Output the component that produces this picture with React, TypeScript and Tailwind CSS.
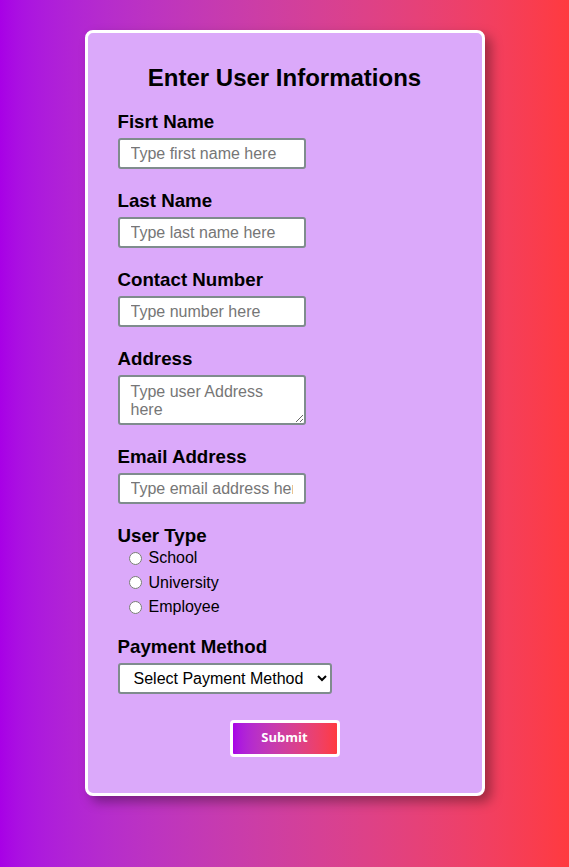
import { useState } from "react";

const inputCls =
  "block h-[31px] w-[188px] rounded-[3px] border-2 border-[#7f8c8d] bg-white px-[11px] text-[16px] text-black placeholder:text-[#767676] outline-none";

function Field({ label, children }: { label: string; children: React.ReactNode }) {
  return (
    <div className="mb-[21px]">
      <label className="block text-[18.72px] font-bold leading-[21px]">{label}</label>
      <div className="mt-[6px]">{children}</div>
    </div>
  );
}

export default function App() {
  const [userType, setUserType] = useState("");
  const [payment, setPayment] = useState("");

  return (
    <div className="min-h-[867px] w-full bg-gradient-to-r from-[#a800e6] to-[#ff3a3e] pt-[30px] font-['Liberation_Sans',Arial,sans-serif] text-black">
      <form
        onSubmit={(e) => e.preventDefault()}
        className="mx-auto w-[400px] rounded-[8px] border-[3px] border-white bg-[#dba9fa] px-[30px] pb-[36px] pt-[31px] shadow-[6px_6px_12px_rgba(0,0,0,0.35)]"
      >
        <h2 className="mb-[19px] text-center text-[24px] font-bold leading-[28px]">Enter User Informations</h2>

        <Field label="Fisrt Name">
          <input className={inputCls} placeholder="Type first name here" />
        </Field>
        <Field label="Last Name">
          <input className={inputCls} placeholder="Type last name here" />
        </Field>
        <Field label="Contact Number">
          <input className={inputCls} placeholder="Type number here" />
        </Field>
        <Field label="Address">
          <textarea
            className="block h-[50px] w-[188px] resize rounded-[3px] border-2 border-[#7f8c8d] bg-white px-[11px] pt-[6px] text-[16px] leading-[18px] text-black placeholder:text-[#767676] outline-none"
            placeholder="Type user Address here"
          />
        </Field>
        <Field label="Email Address">
          <input className={inputCls} placeholder="Type email address here" />
        </Field>

        <div className="mb-[16px]">
          <label className="block text-[18.72px] font-bold leading-[21px]">User Type</label>
          <div className="flex flex-col">
            {["School", "University", "Employee"].map((t) => (
              <label key={t} className="flex h-[24.5px] items-center text-[16px]">
                <input
                  type="radio"
                  name="userType"
                  checked={userType === t}
                  onChange={() => setUserType(t)}
                  className="ml-[11px] mr-[7px] h-[13px] w-[13px]"
                />
                {t}
              </label>
            ))}
          </div>
        </div>

        <div>
          <label className="block text-[18.72px] font-bold leading-[21px]">Payment Method</label>
          <select
            value={payment}
            onChange={(e) => setPayment(e.target.value)}
            className="mt-[6px] block h-[31px] w-[214px] rounded-[3px] border-2 border-[#7f8c8d] bg-white pl-[10px] text-[16px] text-black outline-none"
          >
            <option value="">Select Payment Method</option>
            <option value="card">Card</option>
            <option value="bkash">Bkash</option>
            <option value="cash">Cash</option>
          </select>
        </div>

        <div className="mt-[26px] flex justify-center">
          <button
            type="submit"
            className="h-[37px] w-[110px] rounded-[4px] border-[3px] border-white bg-gradient-to-r from-[#a800e6] to-[#ff3a3e] font-['Open_Sans',sans-serif] text-[13px] font-bold text-white"
          >
            Submit
          </button>
        </div>
      </form>
    </div>
  );
}
